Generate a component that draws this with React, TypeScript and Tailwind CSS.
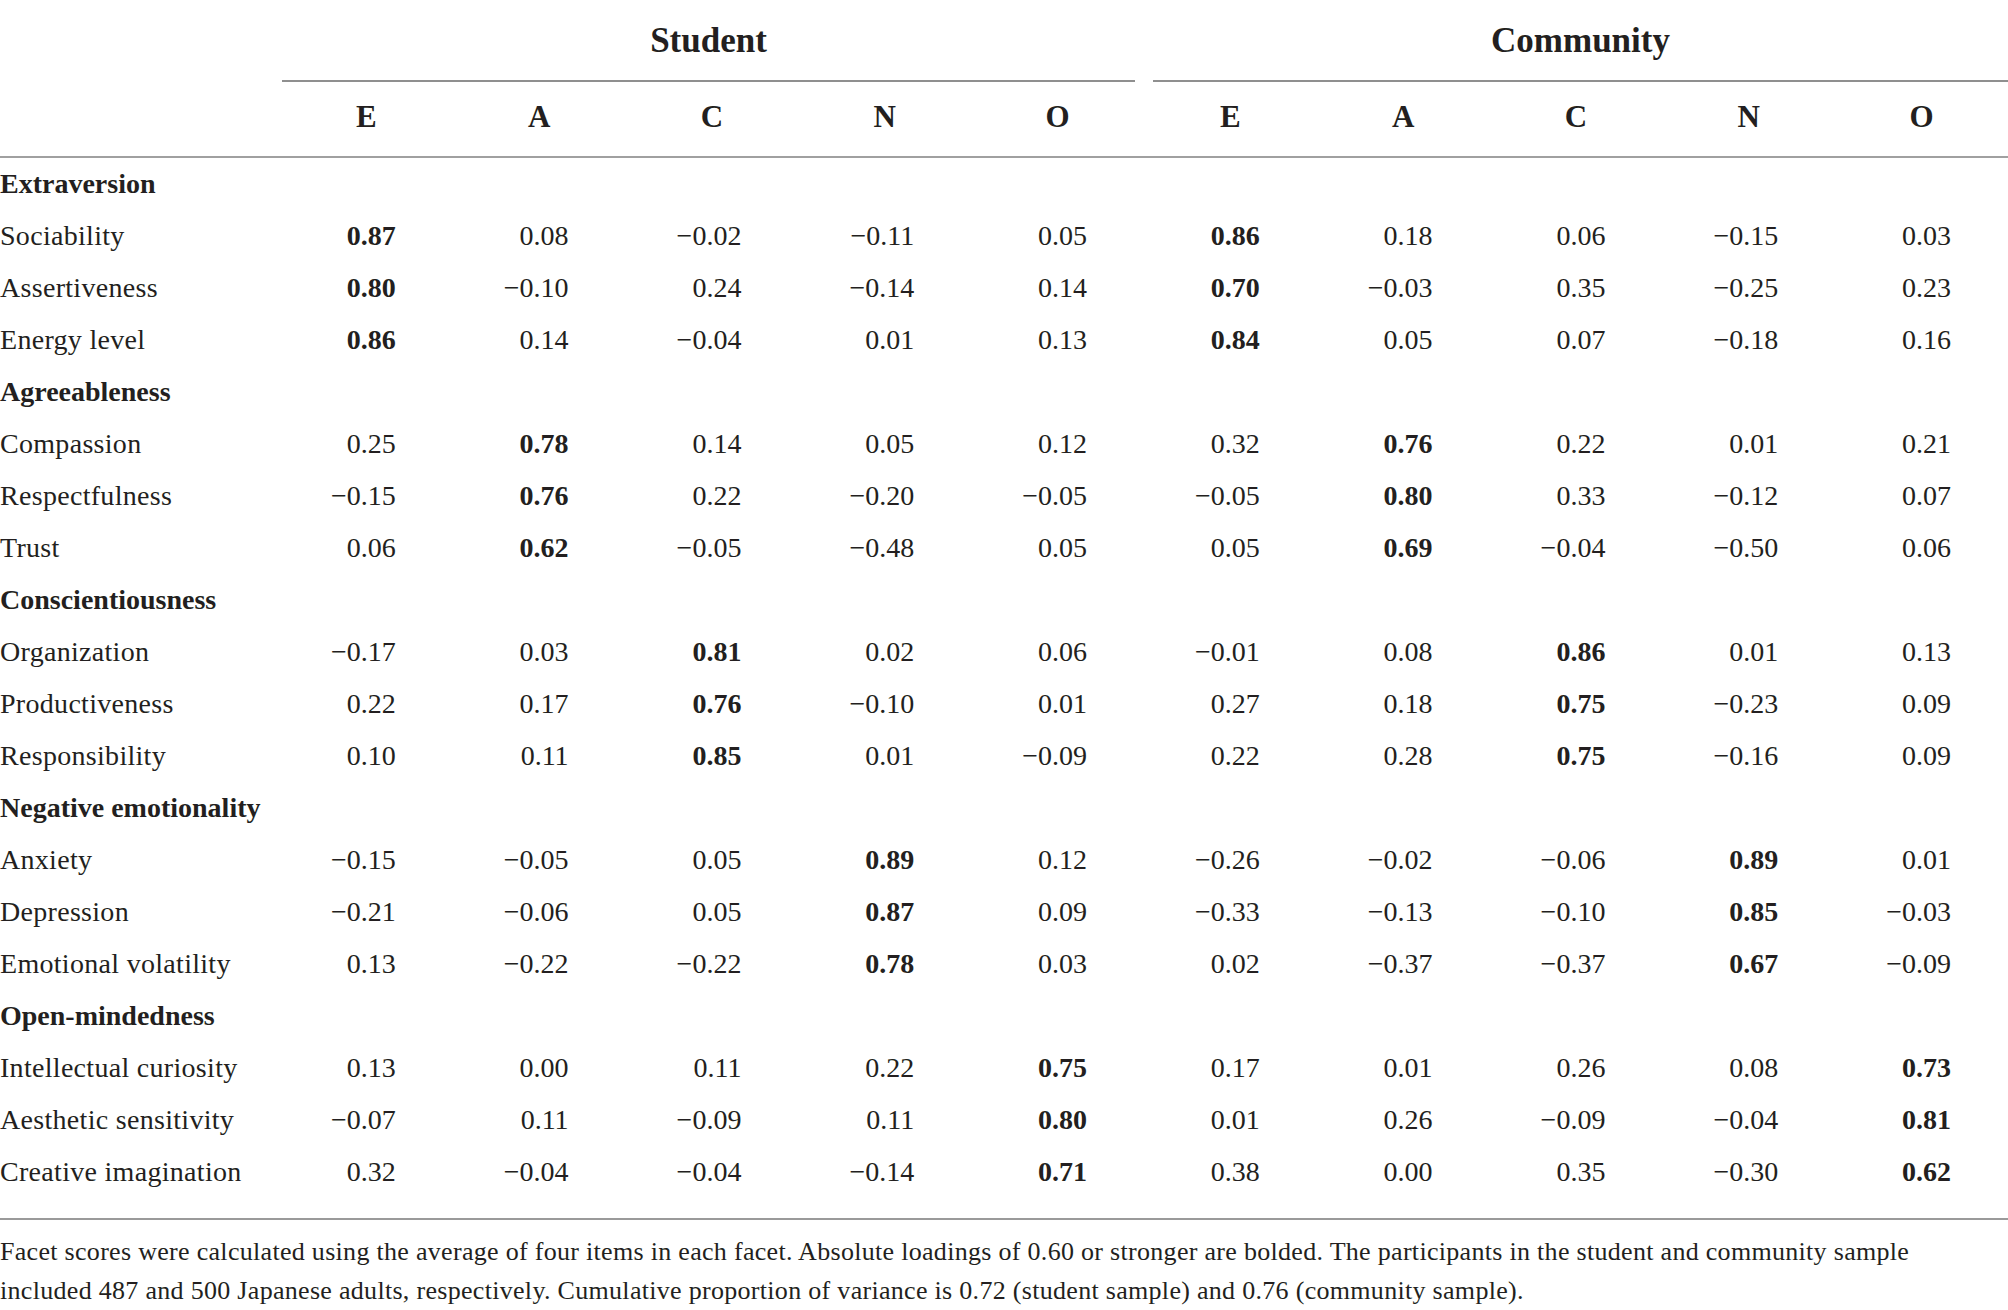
type Row = { label: string; section?: boolean; values?: string[] };

const rows: Row[] = [
  { label: "Extraversion", section: true },
  { label: "Sociability", values: ["0.87", "0.08", "−0.02", "−0.11", "0.05", "0.86", "0.18", "0.06", "−0.15", "0.03"] },
  { label: "Assertiveness", values: ["0.80", "−0.10", "0.24", "−0.14", "0.14", "0.70", "−0.03", "0.35", "−0.25", "0.23"] },
  { label: "Energy level", values: ["0.86", "0.14", "−0.04", "0.01", "0.13", "0.84", "0.05", "0.07", "−0.18", "0.16"] },
  { label: "Agreeableness", section: true },
  { label: "Compassion", values: ["0.25", "0.78", "0.14", "0.05", "0.12", "0.32", "0.76", "0.22", "0.01", "0.21"] },
  { label: "Respectfulness", values: ["−0.15", "0.76", "0.22", "−0.20", "−0.05", "−0.05", "0.80", "0.33", "−0.12", "0.07"] },
  { label: "Trust", values: ["0.06", "0.62", "−0.05", "−0.48", "0.05", "0.05", "0.69", "−0.04", "−0.50", "0.06"] },
  { label: "Conscientiousness", section: true },
  { label: "Organization", values: ["−0.17", "0.03", "0.81", "0.02", "0.06", "−0.01", "0.08", "0.86", "0.01", "0.13"] },
  { label: "Productiveness", values: ["0.22", "0.17", "0.76", "−0.10", "0.01", "0.27", "0.18", "0.75", "−0.23", "0.09"] },
  { label: "Responsibility", values: ["0.10", "0.11", "0.85", "0.01", "−0.09", "0.22", "0.28", "0.75", "−0.16", "0.09"] },
  { label: "Negative emotionality", section: true },
  { label: "Anxiety", values: ["−0.15", "−0.05", "0.05", "0.89", "0.12", "−0.26", "−0.02", "−0.06", "0.89", "0.01"] },
  { label: "Depression", values: ["−0.21", "−0.06", "0.05", "0.87", "0.09", "−0.33", "−0.13", "−0.10", "0.85", "−0.03"] },
  { label: "Emotional volatility", values: ["0.13", "−0.22", "−0.22", "0.78", "0.03", "0.02", "−0.37", "−0.37", "0.67", "−0.09"] },
  { label: "Open-mindedness", section: true },
  { label: "Intellectual curiosity", values: ["0.13", "0.00", "0.11", "0.22", "0.75", "0.17", "0.01", "0.26", "0.08", "0.73"] },
  { label: "Aesthetic sensitivity", values: ["−0.07", "0.11", "−0.09", "0.11", "0.80", "0.01", "0.26", "−0.09", "−0.04", "0.81"] },
  { label: "Creative imagination", values: ["0.32", "−0.04", "−0.04", "−0.14", "0.71", "0.38", "0.00", "0.35", "−0.30", "0.62"] },
];

const letters = ["E", "A", "C", "N", "O", "E", "A", "C", "N", "O"];

// loadings of 0.60 or stronger are bolded
const isStrong = (v: string) => Math.abs(parseFloat(v.replace("−", "-"))) >= 0.6;

export default function App() {
  return (
    <div className="w-[2008px] min-h-[1310px] bg-white text-[#231f20] font-['Liberation_Serif',serif]">
      <div className="grid grid-cols-[280px_repeat(10,minmax(0,1fr))]">
        {/* group headers */}
        <div className="h-[82px]" />
        <div className="col-span-5 mr-[9px] ml-[2px] h-[82px] pt-[3px] flex items-center justify-center border-b-2 border-[#8f8f8f] text-[35px] font-bold">
          Student
        </div>
        <div className="col-span-5 ml-[9px] h-[82px] pt-[3px] flex items-center justify-center border-b-2 border-[#8f8f8f] text-[35px] font-bold">
          Community
        </div>

        {/* column letters */}
        <div className="h-[76px] border-b-2 border-[#a0a0a0]" />
        {letters.map((l, i) => (
          <div key={i} className="h-[76px] pb-[3px] border-b-2 border-[#a0a0a0] flex items-center justify-center text-[31px] font-bold">
            {l}
          </div>
        ))}

        {/* body */}
        {rows.map((r) =>
          r.section ? (
            <div key={r.label} className="col-span-11 h-[52px] flex items-center text-[28px] font-bold whitespace-nowrap">
              {r.label}
            </div>
          ) : (
            <div key={r.label} className="contents">
              <div className="h-[52px] flex items-center text-[28px] tracking-[0.3px] whitespace-nowrap">{r.label}</div>
              {r.values!.map((v, i) => (
                <div
                  key={i}
                  className={`h-[52px] flex items-center justify-end pr-[57px] text-[28px] ${isStrong(v) ? "font-bold" : ""}`}
                >
                  {v}
                </div>
              ))}
            </div>
          )
        )}
      </div>

      <div className="mt-[20px] border-t-2 border-[#9a9a9a] pt-[12px] text-[26px] tracking-[0.3px] leading-[39px] whitespace-nowrap">
        Facet scores were calculated using the average of four items in each facet. Absolute loadings of 0.60 or stronger are bolded. The participants in the student and community sample
        <br />
        included 487 and 500 Japanese adults, respectively. Cumulative proportion of variance is 0.72 (student sample) and 0.76 (community sample).
      </div>
    </div>
  );
}
